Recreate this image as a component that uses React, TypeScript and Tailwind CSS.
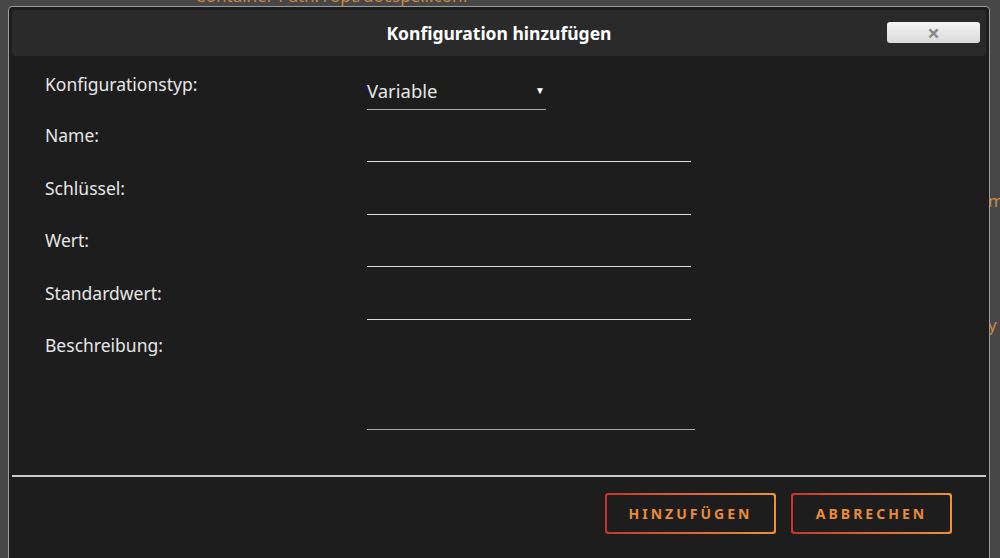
import React from "react";

const fields = ["Name:", "Schlüssel:", "Wert:", "Standardwert:"];

const OutlineButton = ({ label, width }: { label: string; width: string }) => (
  <div className={`${width} h-[41px] rounded-[3px] bg-gradient-to-r from-[#c8332c] to-[#eb913d] p-[2px]`}>
    <button className="flex h-full w-full items-center justify-center rounded-[2px] bg-[#1d1d1d] text-[14px] font-bold tracking-[3px] text-[#e98b3b]">
      {label}
    </button>
  </div>
);

export default function App() {
  return (
    <div
      className="relative h-[558px] w-[1000px] overflow-hidden bg-[#474747]"
      style={{ fontFamily: '"Noto Sans", "Open Sans", sans-serif' }}
    >
      {/* page content behind the modal */}
      <div className="absolute left-[195px] top-[-13px] text-[17px] leading-[18px] text-[#c88a40]">
        Container Path: /opt/docspell.conf
      </div>
      <div className="absolute left-[988px] top-[188px] text-[17px] text-[#c88a40]">m</div>
      <div className="absolute left-[988px] top-[312px] text-[17px] text-[#c88a40]">y</div>

      {/* modal */}
      <div className="absolute left-[8px] top-[6px] h-[580px] w-[982px] rounded-[4px] border border-[#9c9c9c] bg-[#1d1d1d] p-[3px]">
        <div className="relative flex h-[46px] items-center justify-center rounded-[3px] bg-[#2a2a2a]">
          <h2 className="text-[17.5px] font-bold text-white">Konfiguration hinzufügen</h2>
          <button className="absolute right-[6px] top-[12px] flex h-[21px] w-[93px] items-center justify-center rounded-[3px] bg-gradient-to-b from-[#f6f6f6] to-[#d9d9d9] text-[22px] font-bold leading-none text-[#8a8a8a]">
            <span className="-mt-[2px]">×</span>
          </button>
        </div>

        <div className="pl-[33px] pt-[2px]">
          <div className="flex h-[52px] items-start">
            <label className="mt-[14px] w-[322px] text-[17.5px] leading-[24px] text-[#e6e6e6]">Konfigurationstyp:</label>
            <div className="flex h-[52px] w-[179px] items-end border-b border-[#a9a9a9] pb-[6px]">
              <span className="flex-1 text-[18.5px] leading-[24px] text-[#e6e6e6]">Variable</span>
              <span className="mb-[8px] mr-[1px] text-[10px] leading-none text-white">▼</span>
            </div>
          </div>
          {fields.map((f) => (
            <div key={f} className="flex h-[52.5px] items-start">
              <label className="mt-[13px] w-[322px] text-[17.5px] leading-[24px] text-[#e6e6e6]">{f}</label>
              <div className="h-[52px] w-[324px] border-b border-[#dcdcdc]" />
            </div>
          ))}
          <div className="flex h-[110px] items-start">
            <label className="mt-[13px] w-[322px] text-[17.5px] leading-[24px] text-[#e6e6e6]">Beschreibung:</label>
            <div className="h-[110px] w-[328px] border-b-[1.5px] border-[#a8a8a8]" />
          </div>
        </div>

        <div className="mt-[45px] h-[1.5px] bg-[#c9c9c9]" />

        <div className="flex justify-end gap-[15px] pr-[34px] pt-[16px]">
          <OutlineButton label="HINZUFÜGEN" width="w-[171px]" />
          <OutlineButton label="ABBRECHEN" width="w-[161px]" />
        </div>
      </div>
    </div>
  );
}
